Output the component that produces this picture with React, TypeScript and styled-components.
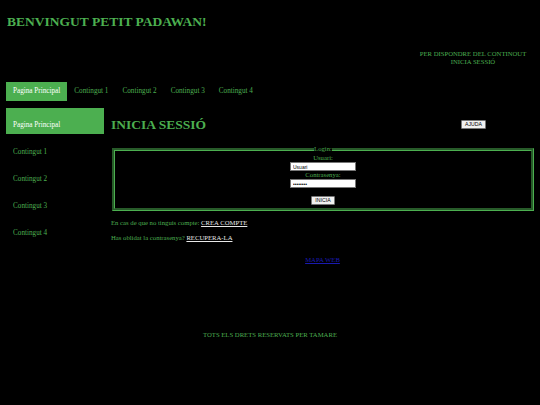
import styled, { createGlobalStyle } from "styled-components";

const GlobalStyle = createGlobalStyle`
  html, body {
    margin: 0;
    padding: 0;
    background: #000;
  }
  body {
    font-family: "Liberation Serif", "Times New Roman", serif;
    color: #4caf50;
  }
`;

const Page = styled.div`
  width: 540px;
  min-height: 405px;
  background: #000;
`;

const Header = styled.header`
  padding: 14px 7px 0 7px;
`;

const Title = styled.h1`
  margin: 0;
  font-size: 13.5px;
  font-weight: 700;
  line-height: 16px;
  color: #4caf50;
`;

const NoticeRow = styled.div`
  display: flex;
  justify-content: flex-end;
  padding: 20px 7px 0 0;
`;

const Notice = styled.p`
  margin: 0;
  width: 120px;
  text-align: center;
  font-size: 6.7px;
  line-height: 8px;
  color: #4caf50;
`;

const Nav = styled.nav`
  display: flex;
  margin: 16px 0 0 6px;
`;

const NavItem = styled.a<{ $active?: boolean }>`
  display: block;
  padding: 0 7px;
  height: 19px;
  line-height: 19px;
  font-size: 7.2px;
  color: ${(p) => (p.$active ? "#fff" : "#4caf50")};
  background: ${(p) => (p.$active ? "#4caf50" : "transparent")};
  text-decoration: none;
`;

const Body = styled.div`
  display: flex;
  gap: 7px;
  margin: 7px 0 0 6px;
`;

const Sidebar = styled.aside`
  width: 98px;
  flex-shrink: 0;
  display: flex;
  flex-direction: column;
`;

const SideItem = styled.a<{ $active?: boolean }>`
  display: block;
  height: ${(p) => (p.$active ? "26px" : "27px")};
  line-height: ${(p) => (p.$active ? "34px" : "36px")};
  padding-left: 7px;
  font-size: 7.2px;
  color: ${(p) => (p.$active ? "#fff" : "#4caf50")};
  background: ${(p) => (p.$active ? "#4caf50" : "transparent")};
  text-decoration: none;
`;

const Main = styled.main`
  width: 423px;
`;

const HeadingRow = styled.div`
  display: flex;
  align-items: center;
  justify-content: space-between;
  padding: 9px 48px 0 0;
`;

const Heading = styled.h2`
  margin: 0;
  font-size: 13.5px;
  font-weight: 700;
  line-height: 16px;
  color: #4caf50;
`;

const SmallButton = styled.button<{ $lift?: number }>`
  display: block;
  position: relative;
  top: ${(p) => -(p.$lift ?? 0)}px;
  font-family: "Liberation Sans", Arial, sans-serif;
  font-size: 5.2px;
  height: 9px;
  padding: 0 3px;
  line-height: 7px;
  color: #000;
  background: #f0f0f0;
  border: 1px solid #767676;
  border-radius: 1px;
`;

const LoginBox = styled.fieldset`
  margin: 13px 0 0 1px;
  padding: 2px 0 3px 0;
  border: 3px groove #4caf50;
  display: flex;
  flex-direction: column;
  align-items: center;
  text-align: center;
`;

const Legend = styled.legend`
  font-size: 6.7px;
  line-height: 6px;
  padding: 0;
  color: #4caf50;
`;

const FieldLabel = styled.label`
  font-size: 6.7px;
  line-height: 8px;
  color: #4caf50;
`;

const TextInput = styled.input`
  box-sizing: border-box;
  width: 66px;
  height: 9px;
  padding: 0 2px;
  font-family: "Liberation Sans", Arial, sans-serif;
  font-size: 5px;
  border: 1px solid #767676;
  background: #fff;
  color: #000;
  outline: none;
`;

const SubmitRow = styled.div`
  display: flex;
  justify-content: center;
  margin-top: 8px;
`;

const Line = styled.p<{ $top: number }>`
  margin: ${(p) => p.$top}px 0 0 0;
  font-size: 6.7px;
  line-height: 8px;
  color: #4caf50;
`;

const LightLink = styled.a`
  color: #e8e8e8;
  text-decoration: underline;
`;

const MapRow = styled.div`
  text-align: center;
  margin-top: 14px;
  font-size: 6.7px;
  line-height: 8px;
`;

const MapLink = styled.a`
  color: #1a1ab0;
  text-decoration: underline;
`;

const Footer = styled.footer`
  text-align: center;
  margin-top: 67px;
  font-size: 6.7px;
  line-height: 8px;
  color: #4caf50;
`;

const navItems = ["Contingut 1", "Contingut 2", "Contingut 3", "Contingut 4"];

export default function App() {
  return (
    <Page>
      <GlobalStyle />
      <Header>
        <Title>BENVINGUT PETIT PADAWAN!</Title>
      </Header>
      <NoticeRow>
        <Notice>
          PER DISPONDRE DEL CONTINOUT
          <br />
          INICIA SESSIÓ
        </Notice>
      </NoticeRow>
      <Nav>
        <NavItem $active>Pagina Principal</NavItem>
        {navItems.map((n) => (
          <NavItem key={n}>{n}</NavItem>
        ))}
      </Nav>
      <Body>
        <Sidebar>
          <SideItem $active>Pagina Principal</SideItem>
          {navItems.map((n) => (
            <SideItem key={n}>{n}</SideItem>
          ))}
        </Sidebar>
        <Main>
          <HeadingRow>
            <Heading>INICIA SESSIÓ</Heading>
            <SmallButton $lift={1}>AJUDA</SmallButton>
          </HeadingRow>
          <LoginBox>
            <Legend>Login:</Legend>
            <FieldLabel>Usuari:</FieldLabel>
            <TextInput defaultValue="Usuari" />
            <FieldLabel>Contrasenya:</FieldLabel>
            <TextInput type="password" defaultValue="password" />
            <SubmitRow>
              <SmallButton>INICIA</SmallButton>
            </SubmitRow>
          </LoginBox>
          <Line $top={8}>
            En cas de que no tinguis compte: <LightLink>CREA COMPTE</LightLink>
          </Line>
          <Line $top={7}>
            Has oblidat la contrasenya? <LightLink>RECUPERA-LA</LightLink>
          </Line>
          <MapRow>
            <MapLink>MAPA WEB</MapLink>
          </MapRow>
        </Main>
      </Body>
      <Footer>TOTS ELS DRETS RESERVATS PER TAMARE</Footer>
    </Page>
  );
}
